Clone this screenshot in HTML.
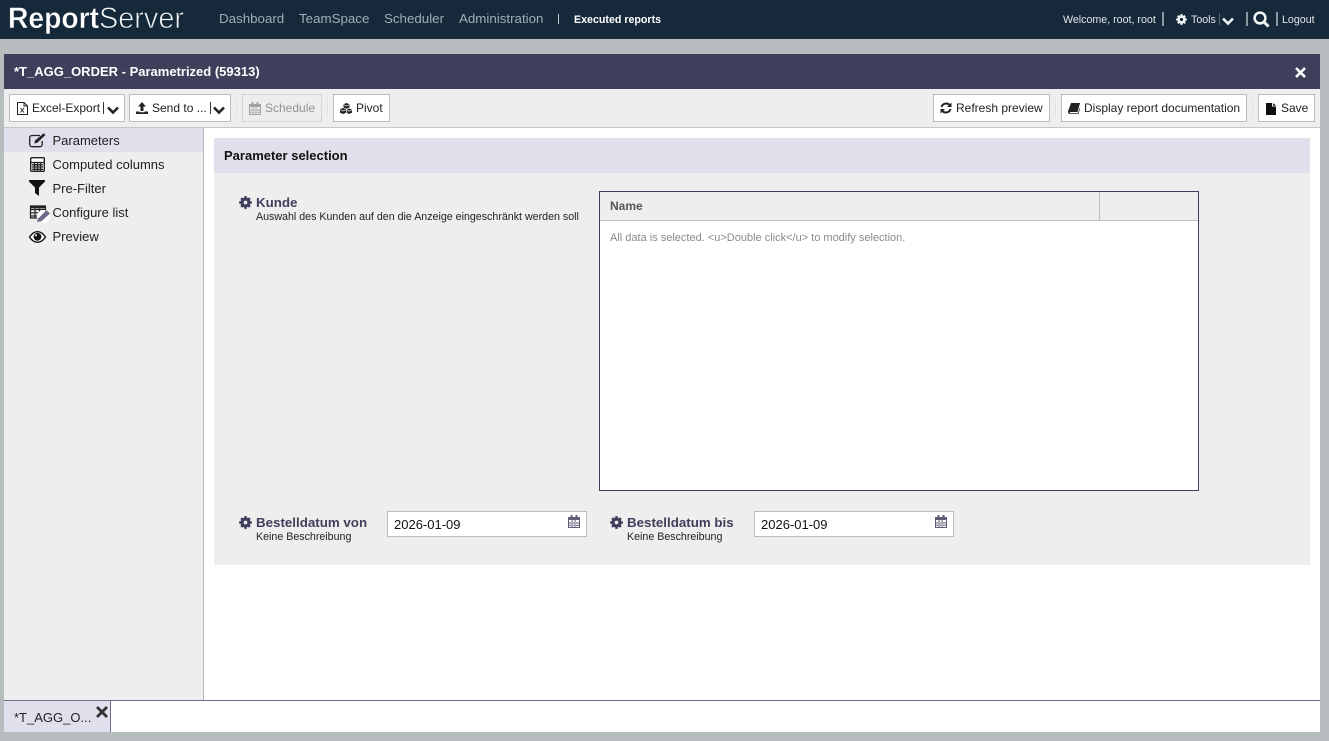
<!DOCTYPE html>
<html><head><meta charset="utf-8"><title>ReportServer</title>
<style>
html,body{margin:0;padding:0;width:1329px;height:741px;overflow:hidden;background:#b7bcbe;font-family:"Liberation Sans",sans-serif;}
.a{position:absolute;white-space:nowrap;}
svg{position:absolute;overflow:visible;}
.nav{top:11px;font-size:13.33px;line-height:16px;color:#a3adb5;}
.hd{font-size:10.67px;line-height:14px;color:#e3e6e9;}
.btn{position:absolute;top:94px;height:26px;background:#fff;border:1px solid #bcbcbc;font-size:12px;line-height:26px;color:#222;white-space:nowrap;}
.sep{position:absolute;top:98px;width:1px;height:18px;background:#e0e0ea;}
.side{left:52.5px;font-size:13px;line-height:16px;color:#222;}
.lbl{font-size:13.33px;font-weight:bold;line-height:16px;color:#3f3f5c;}
.desc{font-size:10.67px;line-height:13px;color:#222;}
.inp{position:absolute;top:511px;width:198px;height:24px;background:#fff;border:1px solid #bcbcbc;font-size:13px;line-height:25px;color:#111;text-indent:6px;}
</style></head><body>
<svg width="0" height="0" style="position:absolute"><defs>
<g id="gear" fill="none" stroke="currentColor"><circle cx="7" cy="7" r="3.700" stroke-width="3.400"/><path stroke-width="2.700" d="M7 .2V3M7 11V13.800M.2 7H3M11 7H13.800M2.300 2.300L4.200 4.200M9.800 9.800L11.700 11.700M11.700 2.300L9.800 4.200M4.200 9.800L2.300 11.700"/></g>
<g id="chev"><path d="M1 1.500 6 6.500 11 1.500" fill="none" stroke="currentColor" stroke-width="2.600"/></g>
<g id="cal"><path fill-rule="evenodd" d="M2.500 0h2v2h3V0h2v2H12v11H0V2h2.500zM1 5v7h10V5zM3.500 5v7h1V5zm3 0v7h1V5zM1 7.500h10v1H1zm0 2.300h10v1H1z"/></g>
</defs></svg>

<!-- header -->
<div class="a" style="left:0;top:0;width:1329px;height:39px;background:#15293a"></div>
<svg style="left:0;top:0" width="200" height="39">
<text x="8" y="28" font-family="Liberation Sans" font-size="30" font-weight="bold" fill="#fff" stroke="#15293a" stroke-width=".4" textLength="91" lengthAdjust="spacingAndGlyphs">Report</text>
<text x="99" y="28" font-family="Liberation Sans" font-size="30" fill="#f2f4f5" stroke="#15293a" stroke-width=".8" textLength="85" lengthAdjust="spacingAndGlyphs">Server</text>
</svg>
<div class="a nav" style="left:219px">Dashboard</div>
<div class="a nav" style="left:299px">TeamSpace</div>
<div class="a nav" style="left:384px">Scheduler</div>
<div class="a nav" style="left:459px">Administration</div>
<div class="a" style="left:558px;top:14px;width:1px;height:10px;background:#c6ccd1"></div>
<div class="a" style="left:574px;top:13px;font-size:10.67px;line-height:14px;font-weight:bold;color:#fff">Executed reports</div>
<div class="a hd" style="left:1063px;top:13px">Welcome, root, root</div>
<div class="a" style="left:1162px;top:12px;width:2px;height:14px;background:#8c98a1"></div>
<svg style="left:1175.500px;top:14px;color:#f0f2f4" width="11" height="11" viewBox="0 0 14 14"><use href="#gear"/></svg>
<div class="a hd" style="left:1191px;top:13px">Tools</div>
<div class="a" style="left:1219px;top:13px;width:1px;height:12px;background:#52626f"></div>
<svg style="left:1222px;top:17px;color:#f0f2f4" width="12" height="8"><use href="#chev"/></svg>
<div class="a" style="left:1246px;top:12px;width:2px;height:14px;background:#8c98a1"></div>
<svg style="left:1253px;top:11px" width="17" height="17" fill="none" stroke="#f2f4f5" stroke-width="2.500"><circle cx="7" cy="7" r="5.400"/><path d="M11 11l4.500 4.500" stroke-width="3"/></svg>
<div class="a" style="left:1276px;top:12px;width:2px;height:14px;background:#8c98a1"></div>
<div class="a hd" style="left:1282px;top:13px">Logout</div>

<!-- panel -->
<div class="a" style="left:4px;top:54px;width:1316px;height:35px;background:#3f3f5c"></div>
<div class="a" style="left:14px;top:64px;font-size:13px;line-height:16px;font-weight:bold;color:#fff">*T_AGG_ORDER - Parametrized (59313)</div>
<svg style="left:1295px;top:67px" width="11" height="11"><path d="M1 1l9 9M10 1l-9 9" stroke="#fff" stroke-width="2.600"/></svg>

<!-- toolbar -->
<div class="a" style="left:4px;top:89px;width:1316px;background:#eee;border-bottom:1px solid #c4c6c8;box-sizing:border-box;height:39px"></div>
<div class="btn" style="left:9px;width:114px"></div>
<svg style="left:17px;top:102px" width="11" height="13" fill="none" stroke="#222"><path d="M.5.500h6.500l3.500 3.500v8.500H.5zM7 .5V4h3.500"/><path d="M3.500 6l3.500 4.500M7 6l-3.500 4.500" stroke-width=".9"/></svg>
<div class="a" style="left:32px;top:100px;font-size:12px;line-height:16px;color:#222">Excel-Export</div>
<div class="a" style="left:103px;top:102px;width:1px;height:12px;background:#333"></div>
<svg style="left:107px;top:106px;color:#222" width="12" height="8"><use href="#chev"/></svg>
<div class="btn" style="left:129px;width:100px"></div>
<svg style="left:136px;top:102px" width="12" height="12" fill="#222"><path d="M6 0l4 4.500H7.500V9h-3V4.500H2zM0 9.500h3.500v.8h5v-.8H12V12H0z"/></svg>
<div class="a" style="left:152px;top:100px;font-size:12px;line-height:16px;color:#222">Send to ...</div>
<div class="a" style="left:210px;top:102px;width:1px;height:12px;background:#333"></div>
<svg style="left:213px;top:106px;color:#222" width="12" height="8"><use href="#chev"/></svg>
<div class="sep" style="left:236px"></div>
<div class="btn" style="left:242px;width:78px;background:#eee;border-color:#d4d4d4"></div>
<svg style="left:249px;top:102px;" width="12" height="13" viewBox="0 0 12 13" fill="#a2a2a2"><use href="#cal"/></svg>
<div class="a" style="left:265px;top:100px;font-size:12px;line-height:16px;color:#909090">Schedule</div>
<div class="sep" style="left:327px"></div>
<div class="btn" style="left:333px;width:55px"></div>
<svg style="left:340px;top:103px" width="12" height="11" fill="#222"><path d="M6.500 0l3 1.300v3.200l-3 1.300-3-1.300V1.300zM3 5l3 1.300v3.400L3 11 0 9.700V6.300zM9.200 5.500L12 6.700v3L9.200 11 6.700 9.700v-3z"/><path d="M3.800 1.800l2.700 1.100 2.700-1.100M.4 6.800L3 8l2.700-1.200M7 7.200l2.200 1 2.500-1" fill="none" stroke="#fff" stroke-width=".6"/></svg>
<div class="a" style="left:356px;top:100px;font-size:12px;line-height:16px;color:#222">Pivot</div>

<div class="btn" style="left:933px;width:115px"></div>
<svg style="left:940px;top:102px" width="12" height="12" fill="none" stroke="#222" stroke-width="2"><path d="M1.500 5A4.800 4.800 0 0 1 10 3.500M10.500 7A4.800 4.800 0 0 1 2 8.500"/><path d="M11.500.5v4.500H7zM.5 11.500V7H5z" fill="#222" stroke="none"/></svg>
<div class="a" style="left:956px;top:100px;font-size:12px;line-height:16px;color:#222">Refresh preview</div>
<div class="sep" style="left:1055px"></div>
<div class="btn" style="left:1061px;width:184px"></div>
<svg style="left:1068px;top:103px" width="12" height="11" fill="#222"><path d="M3 0h9L9.500 9H2.500c-.6 0-.8.4-.8.700s.3.600.8.600H10l1.300-5 .7.300L10.500 11H2C.8 11 0 10 0 9c0-.5.100-1 .3-1.500z"/></svg>
<div class="a" style="left:1084px;top:100px;font-size:12px;line-height:16px;color:#222">Display report documentation</div>
<div class="sep" style="left:1252px"></div>
<div class="btn" style="left:1258px;width:55px"></div>
<svg style="left:1266px;top:103px" width="11" height="12" fill="#111"><path d="M0 0h6v3.500h4V12H0zM7 0l3 2.800H7z"/></svg>
<div class="a" style="left:1281px;top:100px;font-size:12px;line-height:16px;color:#222">Save</div>

<!-- sidebar -->
<div class="a" style="left:4px;top:128px;width:199px;height:572px;background:#eee;border-right:1px solid #b9bcbe"></div>
<div class="a" style="left:204px;top:128px;width:1116px;height:572px;background:#fff"></div>
<div class="a" style="left:4px;top:128px;width:199px;height:24px;background:#e0e0ec"></div>

<svg style="left:29px;top:133px" width="17" height="15" fill="none" stroke="#222" stroke-width="1.300"><path d="M11 2.500H3C1.600 2.500.7 3.400.7 4.500v7c0 1.200.9 2.200 2.300 2.200h8c1.300 0 2.200-1 2.200-2.200V8"/><path d="M6 7.500l-.7 3 3-.7L16.500 2 14.800.2z" fill="#222" stroke="none"/></svg>
<div class="a side" style="top:133px">Parameters</div>
<svg style="left:30px;top:157px" width="15" height="15" fill="none"><rect x=".7" y=".7" width="13.600" height="13.600" rx="1" fill="#fff" stroke="#222" stroke-width="1.400"/><rect x="2" y="2" width="11" height="3" fill="#fff"/><path d="M1 5.500h13M2 7.800h11M2 10h11M2 12.300h11M4.500 6V13.500M7.500 6V13.500M10.500 6V13.500" stroke="#222" stroke-width="1.300"/></svg>
<div class="a side" style="top:157px">Computed columns</div>
<svg style="left:29px;top:180px" width="16" height="16" fill="#111"><path d="M0 0h16v1.500L10 7.500V16L6 13V7.500L0 1.500z"/></svg>
<div class="a side" style="top:181px">Pre-Filter</div>
<svg style="left:29px;top:205px" width="22" height="18"><path d="M1.500 1h15v12H1.500zM2 4.500h14M2 7.800h14M2 11h14M6 3.500V13M10.500 3.500V13" fill="none" stroke="#222" stroke-width="1.200"/><path d="M1 .7h16v2.600H1z" fill="#222"/><circle cx="14.500" cy="11.500" r="6.500" fill="#fff"/><path d="M8 17l.9-3.300L17.500 5.200l3.500 3.300-8.600 7.800z" fill="#6c6c88"/></svg>
<div class="a side" style="top:205px">Configure list</div>
<svg style="left:29px;top:231px" width="17" height="12"><path d="M.5 6C3 2.300 5.700.7 8.500.7S14 2.300 16.500 6C14 9.700 11.300 11.300 8.500 11.300S3 9.700.5 6z" fill="#fff" stroke="#111" stroke-width="1.400"/><circle cx="8.500" cy="5.800" r="3.900" fill="#111"/><circle cx="7" cy="4.300" r="1" fill="#fff"/></svg>
<div class="a side" style="top:229px">Preview</div>

<!-- main form -->
<div class="a" style="left:214px;top:138px;width:1096px;height:427px;background:#eee"></div>
<div class="a" style="left:214px;top:138px;width:1096px;height:35px;background:#e0e0ec"></div>
<div class="a" style="left:224px;top:148px;font-size:13px;line-height:16px;font-weight:bold;color:#111">Parameter selection</div>

<svg style="left:239px;top:196px;color:#3f3f5c" width="13" height="13" viewBox="0 0 14 14"><use href="#gear"/></svg>
<div class="a lbl" style="left:256px;top:195px">Kunde</div>
<div class="a desc" style="left:256px;top:211px">Auswahl des Kunden auf den die Anzeige eingeschränkt werden soll</div>

<div class="a" style="left:599px;top:191px;width:598px;height:298px;background:#fff;border:1px solid #3f3f5c"></div>
<div class="a" style="left:600px;top:192px;width:598px;height:28px;background:#eee;border-bottom:1px solid #bcbfc0"></div>
<div class="a" style="left:1099px;top:192px;width:1px;height:28px;background:#bcbfc0"></div>
<div class="a" style="left:610px;top:199px;font-size:12px;line-height:14px;font-weight:bold;color:#555">Name</div>
<div class="a" style="left:610px;top:232px;font-size:11px;line-height:13px;color:#8a8a8a">All data is selected. &lt;u&gt;Double click&lt;/u&gt; to modify selection.</div>

<svg style="left:239px;top:516px;color:#3f3f5c" width="13" height="13" viewBox="0 0 14 14"><use href="#gear"/></svg>
<div class="a lbl" style="left:256px;top:515px">Bestelldatum von</div>
<div class="a desc" style="left:256px;top:531px">Keine Beschreibung</div>
<div class="inp" style="left:387px">2026-01-09</div>
<svg style="left:568px;top:515px" width="12" height="13" fill="#5f5f78"><use href="#cal"/></svg>

<svg style="left:610px;top:516px;color:#3f3f5c" width="13" height="13" viewBox="0 0 14 14"><use href="#gear"/></svg>
<div class="a lbl" style="left:627px;top:515px">Bestelldatum bis</div>
<div class="a desc" style="left:627px;top:531px">Keine Beschreibung</div>
<div class="inp" style="left:754px">2026-01-09</div>
<svg style="left:935px;top:515px" width="12" height="13" fill="#5f5f78"><use href="#cal"/></svg>

<!-- bottom tab bar -->
<div class="a" style="left:4px;top:700px;width:1316px;height:32px;background:#fff;border-top:1px solid #6f6f8c;box-sizing:border-box"></div>
<div class="a" style="left:4px;top:701px;width:106px;height:31px;background:#e0e0ec;border-right:1px solid #6f6f8c"></div>
<div class="a" style="left:14px;top:710px;font-size:13px;line-height:16px;color:#222">*T_AGG_O...</div>
<svg style="left:96px;top:706px" width="12" height="13"><path d="M1 1l10 10M11 1L1 11" stroke="#333" stroke-width="2.800"/></svg>
</body></html>
